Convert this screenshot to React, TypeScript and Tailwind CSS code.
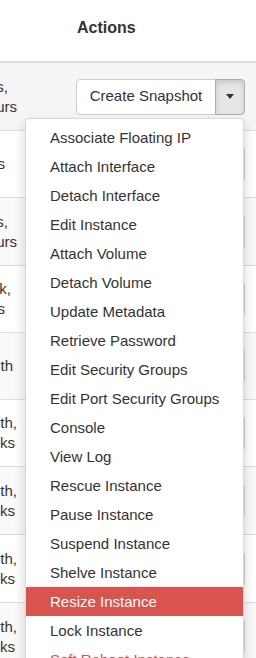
import React from "react";

// One line of a clipped cell: the words overflow to the left, only the end shows.
type Line = { text: string; pad: string };

type Row = {
  height: string;
  bg: string;
  lines: Line[];
  open?: boolean;
};

const rows: Row[] = [
  { height: "h-[68px]", bg: "bg-[#f5f5f5]", open: true, lines: [{ text: "2 days,", pad: "pr-[16px]" }, { text: "4 hours", pad: "pr-[7px]" }] },
  { height: "h-[67px]", bg: "bg-white", lines: [{ text: "s", pad: "pr-[19px]" }] },
  { height: "h-[68px]", bg: "bg-[#f9f9f9]", lines: [{ text: "3 days,", pad: "pr-[16px]" }, { text: "5 hours", pad: "pr-[7px]" }] },
  { height: "h-[67px]", bg: "bg-white", lines: [{ text: "1 week,", pad: "pr-[13px]" }, { text: "s", pad: "pr-[19px]" }] },
  { height: "h-[67px]", bg: "bg-[#f9f9f9]", lines: [{ text: "1 month", pad: "pr-[11px]" }] },
  { height: "h-[67px]", bg: "bg-white", lines: [{ text: "1 month,", pad: "pr-[7px]" }, { text: "2 weeks", pad: "pr-[9px]" }] },
  { height: "h-[68px]", bg: "bg-[#f9f9f9]", lines: [{ text: "1 month,", pad: "pr-[7px]" }, { text: "2 weeks", pad: "pr-[9px]" }] },
  { height: "h-[68px]", bg: "bg-white", lines: [{ text: "1 month,", pad: "pr-[7px]" }, { text: "3 weeks", pad: "pr-[9px]" }] },
  { height: "h-[68px]", bg: "bg-[#f9f9f9]", lines: [{ text: "1 month,", pad: "pr-[7px]" }, { text: "3 weeks", pad: "pr-[9px]" }] },
];

const menuItems = [
  "Associate Floating IP",
  "Attach Interface",
  "Detach Interface",
  "Edit Instance",
  "Attach Volume",
  "Detach Volume",
  "Update Metadata",
  "Retrieve Password",
  "Edit Security Groups",
  "Edit Port Security Groups",
  "Console",
  "View Log",
  "Rescue Instance",
  "Pause Instance",
  "Suspend Instance",
  "Shelve Instance",
  "Resize Instance",
  "Lock Instance",
  "Soft Reboot Instance",
  "Hard Reboot Instance",
];

const ActionButton: React.FC<{ open?: boolean }> = ({ open }) => (
  <div className="flex h-[36px]">
    <button className="h-full w-[140px] rounded-l-[4px] border border-[#ccc] bg-white text-[15px] text-[#333]">
      Create Snapshot
    </button>
    <button
      className={
        open
          ? "-ml-px flex h-full w-[30px] items-center justify-center rounded-r-[4px] border border-[#adadad] bg-[#e6e6e6] shadow-[inset_0_3px_5px_rgba(0,0,0,0.125)]"
          : "-ml-px flex h-full w-[30px] items-center justify-center rounded-r-[4px] border border-[#ccc] bg-white"
      }
    >
      <span className="h-0 w-0 border-x-[4.5px] border-t-[5px] border-x-transparent border-t-[#333]" />
    </button>
  </div>
);

export default function App() {
  return (
    <div className="relative h-[658px] w-[256px] overflow-hidden bg-white font-['Liberation_Sans',Arial,sans-serif] text-[#333]">
      {/* Header */}
      <div className="h-[63px] border-b-2 border-[#ddd] pl-[77px] pt-[18px] text-[16px] font-bold leading-[20px]">
        Actions
      </div>

      {/* Rows */}
      {rows.map((row, i) => (
        <div key={i} className={`flex items-center border-b border-[#ddd] ${row.height} ${row.bg}`}>
          <div className="w-[24px] shrink-0 overflow-hidden text-[15px] leading-[20px]">
            {row.lines.map((line, j) => (
              <div key={j} className={`flex justify-end whitespace-nowrap ${line.pad}`}>
                <span className="shrink-0">{line.text}</span>
              </div>
            ))}
          </div>
          <div className="pl-[52px]">
            <ActionButton open={row.open} />
          </div>
        </div>
      ))}

      {/* Open dropdown menu */}
      <div className="absolute left-[25px] top-[118px] w-[219px] rounded-[4px] border border-[rgba(0,0,0,0.15)] bg-white py-[4px] shadow-[0_6px_12px_rgba(0,0,0,0.175)]">
        {menuItems.map((item) => (
          <div
            key={item}
            className={
              item === "Resize Instance"
                ? "flex h-[29px] items-center bg-[#d9534f] pl-[24px] pt-[1px] text-[15px] leading-[20px] text-white"
                : item === "Soft Reboot Instance" || item === "Hard Reboot Instance"
                  ? "flex h-[29px] items-center pl-[24px] pt-[1px] text-[15px] leading-[20px] text-[#d9534f]"
                  : "flex h-[29px] items-center pl-[24px] pt-[1px] text-[15px] leading-[20px] text-[#333]"
            }
          >
            {item}
          </div>
        ))}
      </div>
    </div>
  );
}
